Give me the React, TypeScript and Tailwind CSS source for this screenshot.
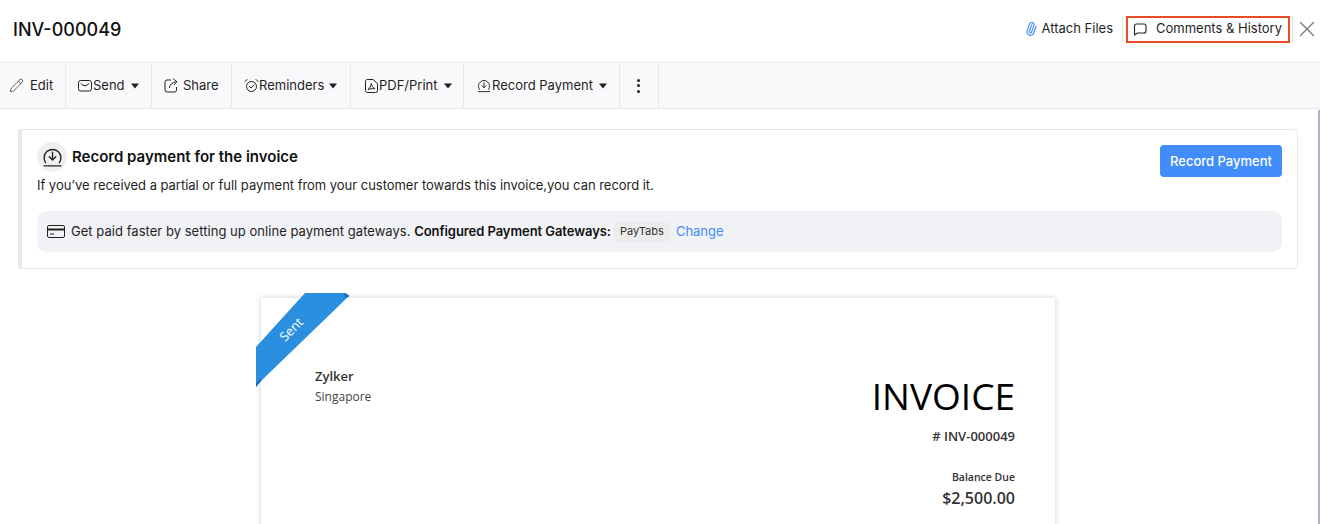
import { Paperclip, Pencil, X } from "lucide-react";
import type { ReactNode } from "react";

const inter = "font-['Inter',sans-serif]";

function Caret() {
  return (
    <svg width="8" height="6" viewBox="0 0 8 6" className="ml-[5px] shrink-0">
      <path d="M0 .5h8L4 5.5z" fill="#1f1f1f" />
    </svg>
  );
}

function MailIcon() {
  return (
    <svg width="14" height="14" viewBox="0 0 14 14" fill="none" stroke="#222" strokeWidth="1">
      <rect x="0.5" y="1.5" width="13" height="10.5" rx="2.2" />
      <path d="M3 4.5c1.2 1.3 2.6 2.2 4 2.2s2.800-.9 4-2.200" strokeLinecap="round" />
    </svg>
  );
}

function ShareIcon() {
  return (
    <svg width="15" height="15" viewBox="0 0 15 15" fill="none" stroke="#222" strokeWidth="1">
      <path d="M7 2H3a2 2 0 0 0-2 2v8a2 2 0 0 0 2 2h7.500a2 2 0 0 0 2-2V9" />
      <path d="M5.500 9.500C6 6.500 8 4.500 11.500 4M9.500 1l3.500 2.800-3 3" strokeLinecap="round" strokeLinejoin="round" />
    </svg>
  );
}

function AlarmIcon() {
  return (
    <svg width="15" height="15" viewBox="0 0 15 15" fill="none" stroke="#222" strokeWidth="1">
      <circle cx="7.500" cy="8.500" r="5" />
      <path d="M5.500 8.500l1.500 1.500 2.800-3M1 3.500L3 1.500M14 3.500l-2-2" strokeLinecap="round" strokeLinejoin="round" />
    </svg>
  );
}

function PdfIcon() {
  return (
    <svg width="13" height="14" viewBox="0 0 13 14" fill="none" stroke="#222" strokeWidth="1">
      <path d="M3 .5h5l4.500 4v7a2 2 0 0 1-2 2H3a2 2 0 0 1-2.500-2v-9A2 2 0 0 1 3 .5z" />
      <path d="M3 10.500c1.500-.8 3-3.500 3.300-6 .5 2.500 2 4.500 3.700 5.200-1.800-.3-4.500 0-7 .8z" strokeLinejoin="round" />
    </svg>
  );
}

function PaymentIcon({ size = 15 }: { size?: number }) {
  return (
    <svg width={size} height={size} viewBox="0 0 15 15" fill="none" stroke="#222" strokeWidth="1">
      <path d="M2.600 11.200a6 6 0 1 1 9.800 0" strokeLinecap="round" />
      <path d="M7.500 3.800v5.400M5.200 7l2.300 2.300L9.800 7" strokeLinecap="round" strokeLinejoin="round" />
      <path d="M1.500 13.500h12" strokeLinecap="round" />
    </svg>
  );
}

function ToolbarItem({
  icon,
  label,
  caret,
  className,
}: {
  icon: ReactNode;
  label: string;
  caret?: boolean;
  className: string;
}) {
  return (
    <div className={`flex h-full shrink-0 items-center border-r border-[#e8e8ef] ${className}`}>
      {icon}
      <span className="text-[13px] text-[#1f1f1f]">{label}</span>
      {caret && <Caret />}
    </div>
  );
}

export default function App() {
  return (
    <div className={`relative flex h-[524px] w-[1320px] flex-col overflow-hidden bg-white ${inter}`}>
      {/* Header */}
      <header className="flex h-[63px] shrink-0 items-center justify-between border-b border-[#ebebef] pb-[4px] pl-[13px]">
        <h1 className="text-[18px] font-medium text-[#111]">INV-000049</h1>
        <div className="flex items-center">
          <Paperclip size={14} strokeWidth={2} className="mr-[4px] rotate-[-25deg] text-[#408dfb]" />
          <span className="text-[13px] text-[#1f1f1f]">Attach Files</span>
          <div className="ml-[9px] h-[26px] w-px bg-[#e5e5e5]" />
          <div className="ml-[3px] flex h-[27px] w-[164px] items-center border-2 border-[#ea4a26] pl-[5px]">
            <svg width="14" height="13" viewBox="0 0 14 13" fill="none" stroke="#222" strokeWidth="1.100">
              <path d="M3 1h8a2 2 0 0 1 2 2v5a2 2 0 0 1-2 2H4.500L1.500 12V3A2 2 0 0 1 3 1z" strokeLinejoin="round" />
            </svg>
            <span className="ml-[9px] whitespace-nowrap text-[13px] text-[#1f1f1f]">Comments &amp; History</span>
          </div>
          <div className="ml-[2px] h-[26px] w-px bg-[#e5e5e5]" />
          <X size={26} strokeWidth={1.2} className="ml-[1px] text-[#777]" />
        </div>
      </header>

      {/* Toolbar */}
      <nav className="flex h-[46px] shrink-0 items-center border-b border-[#e8e8ef] bg-[#f9f9fb]">
        <ToolbarItem className="w-[66px] gap-[6px] pl-[9px]" icon={<Pencil size={15} strokeWidth={1.100} className="text-[#222]" />} label="Edit" />
        <ToolbarItem className="w-[86px] gap-[1px] pl-[12px]" icon={<MailIcon />} label="Send" caret />
        <ToolbarItem className="w-[80px] gap-[4px] pl-[12px]" icon={<ShareIcon />} label="Share" />
        <ToolbarItem className="w-[119px] gap-0 pl-[12px]" icon={<AlarmIcon />} label="Reminders" caret />
        <ToolbarItem className="w-[113px] gap-[1px] pl-[14px]" icon={<PdfIcon />} label="PDF/Print" caret />
        <ToolbarItem className="w-[156px] gap-[1px] pl-[13px]" icon={<PaymentIcon size={14} />} label="Record Payment" caret />
        <div className="flex h-full w-[39px] shrink-0 flex-col items-center justify-center gap-[2.500px] border-r border-[#e8e8ef] pr-[2px]">
          <span className="h-[3px] w-[3px] rounded-full bg-[#222]" />
          <span className="h-[3px] w-[3px] rounded-full bg-[#222]" />
          <span className="h-[3px] w-[3px] rounded-full bg-[#222]" />
        </div>
      </nav>

      {/* Banner */}
      <section className="ml-[18px] mt-[20px] h-[140px] w-[1280px] shrink-0 rounded-[3px] border border-l-[4px] border-[#e8e8f0] bg-white pl-[15px] pr-[15px] pt-[12px]">
        <div className="flex items-start justify-between">
          <div>
            <div className="flex items-center gap-[5px]">
              <div className="flex h-[30px] w-[30px] items-center justify-center rounded-full bg-[#f0f0f0]">
                <PaymentIcon size={21} />
              </div>
              <h2 className="text-[15px] font-semibold text-[#111]">Record payment for the invoice</h2>
            </div>
            <p className="mt-[4px] text-[13px] leading-[18px] tracking-[-0.03px] text-[#1f1f1f]">
              If you’ve received a partial or full payment from your customer towards this invoice,you can record it.
            </p>
          </div>
          <button type="button" className="mt-[3px] h-[32px] w-[122px] rounded-[4px] bg-[#408dfb] pt-[1px] text-[13px] font-medium text-white">
            Record Payment
          </button>
        </div>
        <div className="mt-[17px] flex h-[41px] items-center rounded-[9px] bg-[#f1f2f6] pl-[10px]">
          <svg width="18" height="13" viewBox="0 0 18 13" fill="none" stroke="#222" strokeWidth="1">
            <rect x="0.500" y="0.500" width="17" height="12" rx="1.500" />
            <path d="M.5 4.500h17" strokeWidth="2" />
            <path d="M3 9h4" />
          </svg>
          <span className="ml-[6px] whitespace-nowrap text-[13px] tracking-[0.036px] text-[#1f1f1f]">
            Get paid faster by setting up online payment gateways. <span className="font-semibold tracking-[-0.07px] text-[#111]">Configured Payment Gateways:</span>
          </span>
          <span className="ml-[3px] flex h-[20px] w-[56px] items-center justify-center rounded-[3px] bg-[#ececec] text-[11px] text-[#333]">PayTabs</span>
          <span className="ml-[6px] text-[13px] text-[#408dfb]">Change</span>
        </div>
      </section>

      {/* Invoice */}
      <article className="relative ml-[261px] mt-[29px] flex h-[300px] w-[794px] shrink-0 justify-between bg-white px-[40px] pt-[69px] font-['Open_Sans',sans-serif] shadow-[0_0_6px_rgba(0,0,0,0.2)]">
        <div className="absolute left-[-5px] top-[-5px] h-[95px] w-[95px]">
          <svg width="95" height="95" viewBox="0 0 95 95">
            <path d="M49 0H90L93 3L5 88L0 94V54Z" fill="#2a8fdf" />
            <path d="M88 0L94 3L89 5Z" fill="#1e6fb8" />
            <path d="M0 90L5 85V88L0 94Z" fill="#1e6fb8" />
          </svg>
          <span className="absolute left-[22px] top-[27px] -rotate-45 text-[13px] text-white">Sent</span>
        </div>
        <div className="pl-[14px]">
          <div className="text-[13px] font-semibold leading-[18px] text-[#333]">Zylker</div>
          <div className="mt-[3px] text-[12px] leading-[18px] text-[#444]">Singapore</div>
        </div>
        <div className="flex flex-col items-end">
          <div className="mt-[4px] text-[37px] leading-[50px] text-[#000]">INVOICE</div>
          <div className="mt-[6px] text-[13px] font-semibold leading-[18px] text-[#333]"># INV-000049</div>
          <div className="mt-[25px] text-[10.500px] font-semibold leading-[14px] text-[#333]">Balance Due</div>
          <div className="mt-[3px] text-[16px] font-semibold leading-[22px] text-[#333]">$2,500.00</div>
        </div>
      </article>

      {/* Scrollbar edge */}
      <div className="absolute right-0 top-[110px] h-[414px] w-[2px] bg-[#b4b4c0]" />
    </div>
  );
}
